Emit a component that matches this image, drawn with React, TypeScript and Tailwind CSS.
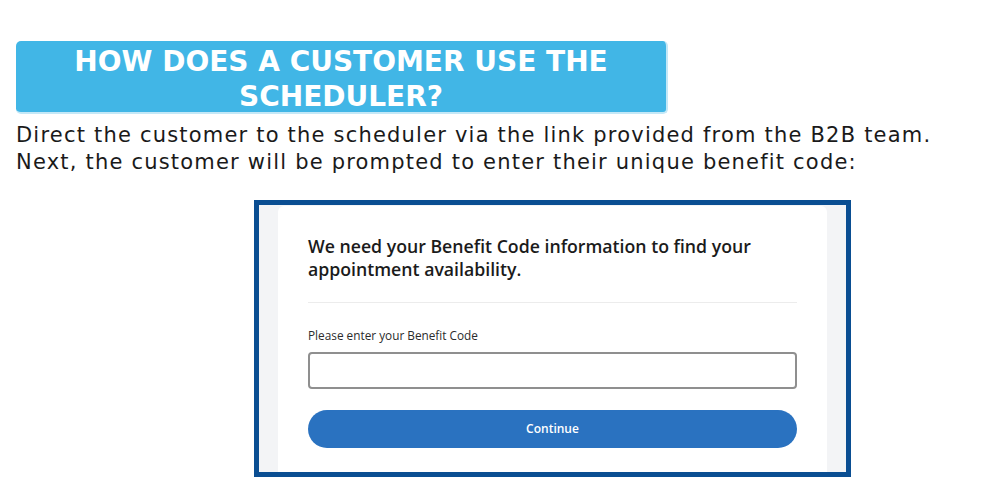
import React from "react";

export default function App() {
  return (
    <div className="w-[984px] h-[488px] bg-white overflow-hidden flex flex-col">
      <div className="mt-[41px] ml-[16px] w-[652px] h-[73px] rounded-[5px] bg-[#41b6e6] border-r-2 border-b-2 border-[#c4e8f7] pt-[4px] flex flex-col items-center justify-center text-white font-bold text-[28px] leading-[35px]" style={{ fontFamily: '"DejaVu Sans", sans-serif' }}>
        <div>HOW DOES A CUSTOMER USE THE</div>
        <div>SCHEDULER?</div>
      </div>
      <div className="ml-[16px] mt-[8px] text-[21px] leading-[27px] tracking-[1.2px] text-[#1a1a1a]" style={{ fontFamily: '"DejaVu Sans", sans-serif' }}>
        <div>Direct the customer to the scheduler via the link provided from the B2B team.</div>
        <div>Next, the customer will be prompted to enter their unique benefit code:</div>
      </div>
      <div className="ml-[254px] mt-[24px] w-[597px] h-[277px] border-[5px] border-[#0a4e92] bg-[#f3f4f6] px-[19px] pt-[1px] flex">
        <div className="flex-1 bg-white rounded-t-[6px] px-[30px] pt-[29px] flex flex-col" style={{ fontFamily: '"Open Sans", sans-serif' }}>
          <div className="text-[17.7px] leading-[23px] font-semibold text-[#1b1b1b]">
            We need your Benefit Code information to find your appointment availability.
          </div>
          <div className="mt-[21px] h-px bg-[#ececec]" />
          <div className="mt-[24px] text-[11.8px] leading-[16px] text-[#2b2b2b]">Please enter your Benefit Code</div>
          <div className="mt-[9px] h-[37px] rounded-[4px] border-2 border-[#8f8f8f] bg-white" />
          <div className="mt-[21px] h-[38px] rounded-full bg-[#2a72c0] flex items-center justify-center text-white text-[12px] font-semibold">
            Continue
          </div>
        </div>
      </div>
    </div>
  );
}
